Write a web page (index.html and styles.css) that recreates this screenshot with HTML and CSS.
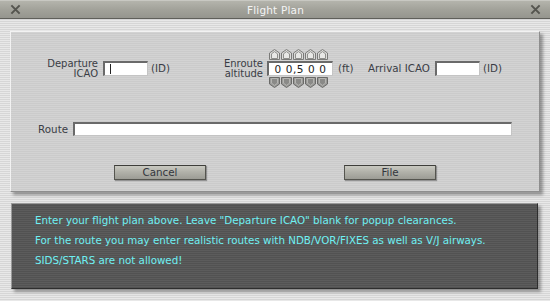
FILE: index.html
```html
<!DOCTYPE html>
<html>
<head>
<meta charset="utf-8">
<link rel="stylesheet" href="styles.css">
</head>
<body>
<div class="window">
  <div class="titlebar">
    <svg class="close" viewBox="0 0 12 12"><path d="M1.5 1.5L10.5 10.5M10.5 1.5L1.5 10.5" stroke="#55554f" stroke-width="2.2"/></svg>
    <span class="title">Flight Plan</span>
    <svg class="close" viewBox="0 0 12 12"><path d="M1.5 1.5L10.5 10.5M10.5 1.5L1.5 10.5" stroke="#55554f" stroke-width="2.2"/></svg>
  </div>
  <div class="content">
    <div class="panel form">
      <div class="row1">
        <div class="lbl dep-lbl"><div>Departure</div><div>ICAO</div></div>
        <div class="field short"><span class="caret"></span></div>
        <div class="unit id1">(ID)</div>
        <div class="lbl alt-lbl"><div>Enroute</div><div>altitude</div></div>
        <div class="spinner">
          <div class="arrows">
            <svg class="arr" viewBox="0 0 11 11"><path d="M0.5 10.5V4L5.5 0.5L10.5 4V10.5Z" fill="#dcdcda" stroke="#7a7a78"/><path d="M2.5 9.5V4.8L5.5 2.6L8.5 4.8V9.5Z" fill="#e8e8e6" stroke="#8e8e8b"/></svg>
            <svg class="arr" viewBox="0 0 11 11"><path d="M0.5 10.5V4L5.5 0.5L10.5 4V10.5Z" fill="#dcdcda" stroke="#7a7a78"/><path d="M2.5 9.5V4.8L5.5 2.6L8.5 4.8V9.5Z" fill="#e8e8e6" stroke="#8e8e8b"/></svg>
            <svg class="arr" viewBox="0 0 11 11"><path d="M0.5 10.5V4L5.5 0.5L10.5 4V10.5Z" fill="#dcdcda" stroke="#7a7a78"/><path d="M2.5 9.5V4.8L5.5 2.6L8.5 4.8V9.5Z" fill="#e8e8e6" stroke="#8e8e8b"/></svg>
            <svg class="arr" viewBox="0 0 11 11"><path d="M0.5 10.5V4L5.5 0.5L10.5 4V10.5Z" fill="#dcdcda" stroke="#7a7a78"/><path d="M2.5 9.5V4.8L5.5 2.6L8.5 4.8V9.5Z" fill="#e8e8e6" stroke="#8e8e8b"/></svg>
            <svg class="arr" viewBox="0 0 11 11"><path d="M0.5 10.5V4L5.5 0.5L10.5 4V10.5Z" fill="#dcdcda" stroke="#7a7a78"/><path d="M2.5 9.5V4.8L5.5 2.6L8.5 4.8V9.5Z" fill="#e8e8e6" stroke="#8e8e8b"/></svg>
          </div>
          <div class="field alt">0 0,5 0 0</div>
          <div class="arrows">
            <svg class="arr" viewBox="0 0 11 11"><path d="M0.5 0.5V7L5.5 10.5L10.5 7V0.5Z" fill="#9a9a98" stroke="#6a6a68"/><path d="M2.5 1.5V6.2L5.5 8.4L8.5 6.2V1.5Z" fill="#8a8a88" stroke="#b4b4b1"/></svg>
            <svg class="arr" viewBox="0 0 11 11"><path d="M0.5 0.5V7L5.5 10.5L10.5 7V0.5Z" fill="#9a9a98" stroke="#6a6a68"/><path d="M2.5 1.5V6.2L5.5 8.4L8.5 6.2V1.5Z" fill="#8a8a88" stroke="#b4b4b1"/></svg>
            <svg class="arr" viewBox="0 0 11 11"><path d="M0.5 0.5V7L5.5 10.5L10.5 7V0.5Z" fill="#9a9a98" stroke="#6a6a68"/><path d="M2.5 1.5V6.2L5.5 8.4L8.5 6.2V1.5Z" fill="#8a8a88" stroke="#b4b4b1"/></svg>
            <svg class="arr" viewBox="0 0 11 11"><path d="M0.5 0.5V7L5.5 10.5L10.5 7V0.5Z" fill="#9a9a98" stroke="#6a6a68"/><path d="M2.5 1.5V6.2L5.5 8.4L8.5 6.2V1.5Z" fill="#8a8a88" stroke="#b4b4b1"/></svg>
            <svg class="arr" viewBox="0 0 11 11"><path d="M0.5 0.5V7L5.5 10.5L10.5 7V0.5Z" fill="#9a9a98" stroke="#6a6a68"/><path d="M2.5 1.5V6.2L5.5 8.4L8.5 6.2V1.5Z" fill="#8a8a88" stroke="#b4b4b1"/></svg>
          </div>
        </div>
        <div class="unit ft">(ft)</div>
        <div class="lbl arr-lbl">Arrival ICAO</div>
        <div class="field short"></div>
        <div class="unit id2">(ID)</div>
      </div>
      <div class="row2">
        <div class="lbl route-lbl">Route</div>
        <div class="field route"></div>
      </div>
      <div class="row3">
        <div class="btn cancel">Cancel</div>
        <div class="btn file">File</div>
      </div>
    </div>
    <div class="panel info">
      <p>Enter your flight plan above. Leave "Departure ICAO" blank for popup clearances.</p>
      <p>For the route you may enter realistic routes with NDB/VOR/FIXES as well as V/J airways.</p>
      <p>SIDS/STARS are not allowed!</p>
    </div>
  </div>
</div>
</body>
</html>
```

FILE: styles.css
```css
html, body {
  margin: 0;
  padding: 0;
}
body {
  width: 550px;
  height: 301px;
  overflow: hidden;
  font-family: "DejaVu Sans", "Liberation Sans", sans-serif;
  font-size: 10.3px;
  color: #3a3d45;
  background: repeating-linear-gradient(to bottom, #e8e8e8 0px, #e8e8e8 1px, #d6d6d6 1px, #d6d6d6 2px);
}
.window {
  width: 550px;
  height: 301px;
  display: flex;
  flex-direction: column;
}
.titlebar {
  height: 17px;
  flex: none;
  display: flex;
  align-items: center;
  justify-content: space-between;
  padding: 0 9px 0 10px;
  background: linear-gradient(to bottom, #b4b4ac 0%, #a2a29a 50%, #95958e 100%);
  border-top: 1px solid #c8c8c2;
  border-bottom: 1px solid #5f5f5a;
}
.title {
  font-size: 10.5px;
  color: #f4f4f4;
  letter-spacing: 0.2px;
}
.close {
  width: 11px;
  height: 11px;
  display: block;
}
.content {
  padding: 12px 10px 0 10px;
}
.panel {
  box-shadow: 3px 3px 3px rgba(0,0,0,0.35);
}
.form {
  width: 528px;
  height: 159px;
  border: 1px solid #8e8e8e;
  border-top-color: #f2f2f2;
  border-left-color: #f2f2f2;
  background: repeating-linear-gradient(to bottom, #d3d3d3 0px, #d3d3d3 1px, #cbcbcb 1px, #cbcbcb 2px);
}
.row1 {
  display: flex;
  align-items: center;
  margin-top: 16px;
  height: 40px;
}
.lbl {
  line-height: 12px;
  white-space: nowrap;
}
.dep-lbl, .alt-lbl {
  line-height: 10px;
  font-size: 10px;
  padding-top: 1px;
}
.dep-lbl {
  width: 87px;
  text-align: right;
  margin-right: 5px;
}
.field {
  background: #fff;
  border-top: 2px solid #6a6a6a;
  border-left: 2px solid #6a6a6a;
  border-right: 1px solid #c4c4c4;
  border-bottom: 1px solid #c4c4c4;
  box-sizing: border-box;
  height: 15px;
}
.short {
  width: 45px;
  position: relative;
}
.caret {
  position: absolute;
  left: 5px;
  top: 1px;
  width: 1px;
  height: 10px;
  background: #222;
}
.unit {
  margin-left: 3px;
  white-space: nowrap;
}
.id1 {
  width: 20px;
}
.alt-lbl {
  width: 92px;
  text-align: right;
  margin-right: 4px;
}
.spinner {
  display: flex;
  flex-direction: column;
  align-items: flex-start;
}
.arrows {
  display: flex;
  gap: 1px;
  padding-left: 2px;
  height: 11px;
}
.arr {
  width: 11px;
  height: 11px;
  display: block;
}
.alt {
  width: 66px;
  font-size: 10.5px;
  line-height: 12px;
  text-align: center;
  color: #222;
  letter-spacing: 0.6px;
  margin: 1px 0;
}
.ft {
  margin-left: 5px;
  width: 15px;
}
.arr-lbl {
  margin-left: 15px;
  margin-right: 5px;
}
.row2 {
  display: flex;
  align-items: center;
  margin-top: 34px;
}
.route-lbl {
  width: 57px;
  text-align: right;
  margin-right: 5px;
}
.route {
  width: 439px;
  height: 14px;
}
.row3 {
  display: flex;
  margin-top: 29px;
  padding-left: 103px;
  gap: 138px;
}
.btn {
  width: 92px;
  height: 15px;
  box-sizing: border-box;
  border: 1px solid #55554f;
  border-top-color: #3e3e3a;
  background: linear-gradient(to bottom, #c9c9c1 0%, #b2b2aa 45%, #9c9c95 100%);
  text-align: center;
  line-height: 13px;
  color: #33363d;
  box-shadow: 1px 1px 1px rgba(0,0,0,0.3);
}
.info {
  margin-top: 11px;
  margin-left: 1px;
  width: 527px;
  height: 86px;
  border: 1px solid #2e2e2e;
  border-top-color: #9a9a9a;
  border-left-color: #9a9a9a;
  background: repeating-linear-gradient(to bottom, #5c5c5c 0px, #5c5c5c 1px, #525252 1px, #525252 2px);
  padding: 6px 0 0 23px;
  box-sizing: border-box;
}
.info p {
  margin: 0;
  line-height: 20px;
  color: #6ff0f3;
}
```
